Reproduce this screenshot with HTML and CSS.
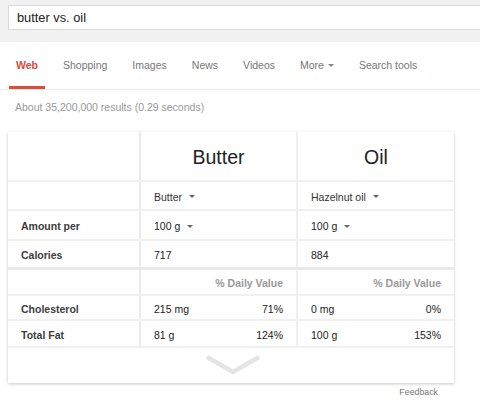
FILE: index.html
```html
<!DOCTYPE html>
<html>
<head>
<meta charset="utf-8">
<link rel="stylesheet" href="styles.css">
</head>
<body>
<div class="topbar">
  <div class="search">butter vs. oil</div>
</div>
<div class="tabs">
  <div class="tab active">Web</div>
  <div class="tab">Shopping</div>
  <div class="tab">Images</div>
  <div class="tab">News</div>
  <div class="tab">Videos</div>
  <div class="tab">More<span class="caret tabcaret"></span></div>
  <div class="tab">Search tools</div>
</div>
<div class="stats">About 35,200,000 results (0.29 seconds)</div>
<div class="card">
  <div class="row head">
    <div class="cell c1"></div>
    <div class="cell c2 title">Butter</div>
    <div class="cell c3 title">Oil</div>
  </div>
  <div class="row r2">
    <div class="cell c1"></div>
    <div class="cell c2 sel">Butter<span class="caret"></span></div>
    <div class="cell c3 sel">Hazelnut oil<span class="caret"></span></div>
  </div>
  <div class="row r3">
    <div class="cell c1 label">Amount per</div>
    <div class="cell c2 val">100 g<span class="caret"></span></div>
    <div class="cell c3 val">100 g<span class="caret"></span></div>
  </div>
  <div class="row r4 thick">
    <div class="cell c1 label">Calories</div>
    <div class="cell c2 val">717</div>
    <div class="cell c3 val">884</div>
  </div>
  <div class="row r5">
    <div class="cell c1"></div>
    <div class="cell c2 dv">% Daily Value</div>
    <div class="cell c3 dv">% Daily Value</div>
  </div>
  <div class="row r6">
    <div class="cell c1 label">Cholesterol</div>
    <div class="cell c2 val split"><span>215 mg</span><span>71%</span></div>
    <div class="cell c3 val split"><span>0 mg</span><span>0%</span></div>
  </div>
  <div class="row r7">
    <div class="cell c1 label">Total Fat</div>
    <div class="cell c2 val split"><span>81 g</span><span>124%</span></div>
    <div class="cell c3 val split"><span>100 g</span><span>153%</span></div>
  </div>
  <div class="more">
    <svg width="56" height="20" viewBox="0 0 56 20"><polyline points="2,2 28,17 54,2" fill="none" stroke="#e4e4e4" stroke-width="4.5"/></svg>
  </div>
</div>
<div class="feedback">Feedback</div>
</body>
</html>
```

FILE: styles.css
```css
* { box-sizing: border-box; }
body {
  margin: 0;
  font-family: "Liberation Sans", Arial, sans-serif;
  background: #fff;
  width: 480px;
  overflow: hidden;
}
.topbar {
  background: #f1f1f1;
  height: 42px;
  padding: 5px 0 0 8px;
}
.search {
  height: 25px;
  width: 480px;
  background: #fff;
  border: 1px solid #d9d9d9;
  font-size: 12.8px;
  line-height: 23px;
  padding-left: 8px;
  color: #222;
}
.tabs {
  display: flex;
  gap: 11px;
  height: 48px;
  padding-left: 9px;
  border-bottom: 1px solid #ebebeb;
}
.tab {
  padding: 0 7px;
  font-size: 10.5px;
  color: #777;
  display: flex;
  align-items: center;
  border-bottom: 3px solid transparent;
  padding-top: 2px;
}
.tab.active {
  color: #dd4b39;
  font-weight: bold;
  border-bottom-color: #dd4b39;
}
.caret {
  display: inline-block;
  width: 0;
  height: 0;
  border-left: 3px solid transparent;
  border-right: 3px solid transparent;
  border-top: 3px solid #666;
  margin-left: 7px;
  vertical-align: middle;
}
.tabcaret {
  margin-left: 4px;
  border-top-color: #888;
}
.stats {
  font-size: 10.5px;
  color: #999;
  padding: 10px 0 0 15px;
  line-height: 14px;
  height: 42px;
}
.card {
  margin-left: 8px;
  width: 446px;
  background: #fff;
  box-shadow: 0 1px 3px rgba(0,0,0,0.22);
}
.row {
  display: grid;
  grid-template-columns: 133px 157px 156px;
  border-bottom: 2px solid #f0f0f0;
}
.row.thick { border-bottom: 3px solid #e9e9e9; }
.cell {
  display: flex;
  align-items: center;
  padding: 0 13px;
  font-size: 10.5px;
  color: #222;
}
.c1 { border-right: 2px solid #ebebeb; }
.c2 { border-right: 2px solid #efefef; }
.head { height: 50px; }
.r2 { height: 29px; }
.r3 { height: 30px; }
.r4 { height: 29px; }
.r5 { height: 26px; }
.r6 { height: 25px; }
.r7 { height: 27px; }
.title {
  justify-content: center;
  font-size: 19.5px;
  color: #222;
  padding-top: 2px;
}
.sel { color: #333; padding-top: 2px; }
.label { font-weight: bold; color: #3c3c3c; padding-top: 2px; }
.val { padding-top: 2px; }
.dv {
  justify-content: flex-end;
  color: #999;
  font-weight: bold;
  padding-top: 2px;
}
.split { justify-content: space-between; }
.more {
  height: 35px;
  display: flex;
  justify-content: center;
  padding-top: 7px;
}
.more svg { display: block; margin-left: 4px; }
.feedback {
  width: 454px;
  text-align: right;
  padding-right: 16px;
  font-size: 8.8px;
  color: #777;
  margin-top: 4px;
  line-height: 11px;
}
```
